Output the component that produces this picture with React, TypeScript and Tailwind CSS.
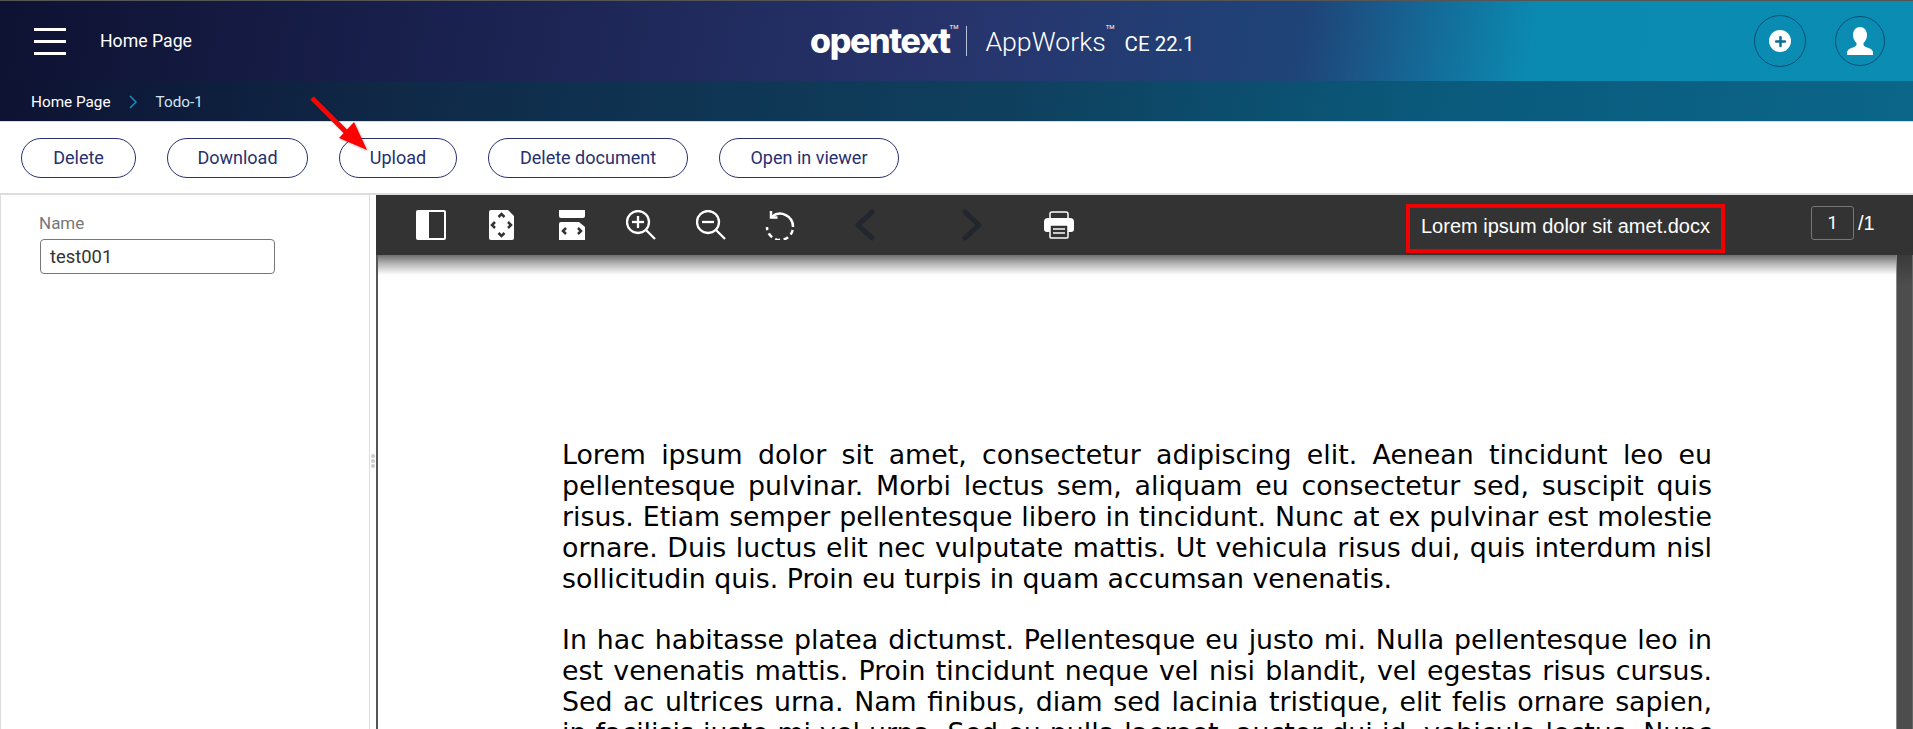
import { Plus } from "lucide-react";

const BUTTONS = [
	{ label: "Delete", width: "w-[115px]" },
	{ label: "Download", width: "w-[141px]" },
	{ label: "Upload", width: "w-[118px]" },
	{ label: "Delete document", width: "w-[200px]" },
	{ label: "Open in viewer", width: "w-[180px]" }
];

function Pill({ label, width }: { label: string; width: string }) {
	return (
		<button className={`${width} h-10 rounded-[20px] border border-[#27306f] bg-white text-[#27306f] text-[18px] font-['Roboto',sans-serif]`}>
			{label}
		</button>
	);
}

function SidebarIcon() {
	return (
		<svg width="30" height="30" viewBox="0 0 30 30">
			<rect width="30" height="30" rx="2" fill="#fff" />
			<rect x="13" y="2" width="15" height="26" fill="#333" />
		</svg>
	);
}

function FitPageIcon() {
	return (
		<svg width="25" height="30" viewBox="0 0 25 30" fill="none">
			<path d="M2 0h17l6 6v22a2 2 0 0 1-2 2H2a2 2 0 0 1-2-2V2a2 2 0 0 1 2-2z" fill="#fff" />
			<path d="M9.5 7l3-3 3 3M9.5 23l3 3 3-3M6 12l-3 3 3 3M19 12l3 3-3 3" stroke="#333" strokeWidth="2.5" />
		</svg>
	);
}

function FitWidthIcon() {
	return (
		<svg width="26" height="30" viewBox="0 0 26 30" fill="none">
			<path d="M0 0h26v6a2 2 0 0 1-2 2H2a2 2 0 0 1-2-2z" fill="#fff" />
			<path d="M2 12h18l6 5v13H0V14a2 2 0 0 1 2-2z" fill="#fff" />
			<path d="M7 18l-3 3 3 3M19 18l3 3-3 3" stroke="#333" strokeWidth="2.5" />
		</svg>
	);
}

function ZoomIcon({ plus }: { plus?: boolean }) {
	return (
		<svg width="30" height="30" viewBox="0 0 30 30" fill="none" stroke="#fff" strokeWidth="2.3">
			<circle cx="12" cy="12" r="11" />
			<path d="M20 20l9 9" />
			<path d="M6 12h12" />
			{plus && <path d="M12 6v12" />}
		</svg>
	);
}

function RotateIcon() {
	return (
		<svg width="30" height="30" viewBox="0 0 30 30" fill="none" stroke="#fff" strokeWidth="2.5">
			<path d="M7 6.500A13 13 0 0 1 28 17" />
			<path d="M28 17A13 13 0 0 1 2 17" strokeDasharray="5 3.600" strokeDashoffset="-3" />
			<path d="M6 1v6.500h6.500" />
		</svg>
	);
}

function Chevron({ right }: { right?: boolean }) {
	return (
		<svg width="20" height="32" viewBox="0 0 20 32" fill="none" stroke="#22262e" strokeWidth="5" strokeLinecap="round" strokeLinejoin="round">
			<path d={right ? "M3 3l14 13L3 29" : "M17 3L3 16l14 13"} />
		</svg>
	);
}

function PrintIcon() {
	return (
		<svg width="30" height="28" viewBox="0 0 30 28" fill="none">
			<path d="M6 8V3a2 2 0 0 1 2-2h14a2 2 0 0 1 2 2v5" stroke="#fff" strokeWidth="1.5" />
			<path d="M4 7h22a4 4 0 0 1 4 4v7a3 3 0 0 1-3 3H3a3 3 0 0 1-3-3v-7a4 4 0 0 1 4-4z" fill="#fff" />
			<rect x="6" y="14" width="18" height="13" rx="1" fill="#333" stroke="#fff" strokeWidth="1.5" />
			<path d="M9 18h12M9 22h12" stroke="#fff" strokeWidth="1.5" />
		</svg>
	);
}

function UserBust() {
	return (
		<svg width="26" height="28" viewBox="0 0 26 28" fill="#fff">
			<path d="M13 0c4 0 7 3.500 7 8 0 3.500-1.500 6-3.500 8v1.500c0 1.500 2 2.500 5 3.500 3 1 4.500 2.500 4.500 5v2H0v-2c0-2.500 1.500-4 4.500-5 3-1 5-2 5-3.500V16C7.500 14 6 11.500 6 8c0-4.500 3-8 7-8z" />
		</svg>
	);
}

function RedArrow() {
	return (
		<svg className="absolute left-[306px] top-[92px] pointer-events-none drop-shadow-[1px_1px_1px_rgba(0,0,0,0.3)]" width="70" height="66" viewBox="0 0 70 66">
			<path d="M6 6l42 42" stroke="#ff0000" strokeWidth="5" />
			<path d="M61 58L33 46l15-16z" fill="#ff0000" />
		</svg>
	);
}

export default function App() {
	return (
		<div className="relative h-[729px] w-[1913px] overflow-hidden bg-white font-['Roboto',sans-serif]">
			<div className="h-px bg-[#555]" />
			<header className="h-[80px] flex items-center bg-[linear-gradient(100deg,#0e1232_0%,#1a2250_25%,#27346c_50%,#1f4478_68%,#0b8ab1_80%,#0a8cb3_100%)] text-white">
				<div className="ml-[34px] w-[32px] flex flex-col gap-[9px]">
					<span className="h-[3px] bg-white" />
					<span className="h-[3px] bg-white" />
					<span className="h-[3px] bg-white" />
				</div>
				<span className="ml-[34px] text-[17.7px]">Home Page</span>
				<div className="ml-[618px] flex items-center">
					<span className="font-['Inter',sans-serif] font-extrabold text-[34px] tracking-[-1.4px] leading-none">opentext</span>
					<span className="self-start mt-[-2px] text-[6px]">TM</span>
					<span className="ml-[8px] w-px h-[30px] bg-[#b8c0d8]" />
					<span className="ml-[18px] mt-[2px] text-[26.7px] font-light leading-none">AppWorks</span>
					<span className="self-start mt-[-2px] text-[6px]">TM</span>
					<span className="ml-[10px] mt-[6px] text-[20.5px] leading-none">CE 22.1</span>
				</div>
				<div className="ml-auto mr-[28px] flex items-center gap-[29px]">
					<div className="w-[52px] h-[52px] rounded-full border border-[#074f75] flex items-center justify-center">
						<span className="w-[22px] h-[22px] rounded-full bg-white flex items-center justify-center">
							<Plus size={15} strokeWidth={4} color="#0a6f95" />
						</span>
					</div>
					<div className="w-[50px] h-[50px] rounded-full border border-[#074f75] flex items-center justify-center">
						<UserBust />
					</div>
				</div>
			</header>
			<nav className="h-[40px] flex items-center pl-[31px] pt-[2px] text-[15.3px] text-white bg-[linear-gradient(100deg,#0e1232_0%,#0f2a48_22%,#0e4260_55%,#0a5a7c_75%,#0b6689_100%)]">
				<span>Home Page</span>
				<svg className="ml-[18px]" width="8" height="14" viewBox="0 0 8 14" fill="none" stroke="#1a8fc0" strokeWidth="1.5">
					<path d="M1 1l6 6-6 6" />
				</svg>
				<span className="ml-[19px] text-[#cfe6f2]">Todo-1</span>
			</nav>
			<div className="h-[72px] flex items-center gap-[31px] pl-[21px] border-t border-[#d5dde4]">
				{BUTTONS.map(b => (
					<Pill key={b.label} label={b.label} width={b.width} />
				))}
			</div>
			<div className="h-[2px] bg-[#ddd]" />
			<div className="flex h-[534px]">
				<aside className="w-[370px] border-l border-r border-[#ddd] pl-[39px] pt-[18px] shrink-0">
					<label className="block -ml-px text-[#777] text-[17px] leading-[20px]">Name</label>
					<div className="mt-[6px] w-[235px] h-[35px] border border-[#777] rounded-[4px] flex items-center pl-[9px] text-[18.4px] text-[#333]">
						test001
					</div>
				</aside>
				<div className="w-[6px] shrink-0 flex flex-col items-center justify-center gap-[1px] pb-[2px]">
					<span className="w-[4px] h-[4px] rounded-full bg-[#ccc]" />
					<span className="w-[4px] h-[4px] rounded-full bg-[#ccc]" />
					<span className="w-[4px] h-[4px] rounded-full bg-[#ccc]" />
				</div>
				<main className="relative flex-1 min-w-0 flex flex-col">
					<div className="h-[60px] shrink-0 bg-[#333] flex items-center text-white relative z-10">
						<div className="ml-[40px] flex items-center">
							<SidebarIcon />
							<span className="ml-[43px]"><FitPageIcon /></span>
							<span className="ml-[45px]"><FitWidthIcon /></span>
							<span className="ml-[41px]"><ZoomIcon plus /></span>
							<span className="ml-[40px]"><ZoomIcon /></span>
							<span className="ml-[39px]"><RotateIcon /></span>
							<span className="ml-[60px]"><Chevron /></span>
							<span className="ml-[87px]"><Chevron right /></span>
							<span className="ml-[62px]"><PrintIcon /></span>
						</div>
						<div className="ml-[332px] w-[319px] h-[49px] translate-y-[3px] pb-[5px] border-[4px] border-[#f00000] flex items-center justify-center text-[20px] font-['Liberation_Sans',sans-serif]">
							Lorem ipsum dolor sit amet.docx
						</div>
						<div className="ml-[86px] w-[43px] h-[34px] mt-[-5px] border border-[#777] rounded-[3px] flex items-center justify-center text-[18px]">
							1
						</div>
						<span className="ml-[4px] mt-[-5px] text-[20px] font-['Liberation_Sans',sans-serif]">/1</span>
					</div>
					<div className="relative flex-1 border-l-2 border-[#555] pl-[184px] pt-[184px] pr-[201px]">
						<div className="absolute left-0 right-0 top-0 h-[20px] bg-[linear-gradient(to_bottom,#6e6e6e,#b0b0b0_40%,#fff)]" />
						<div className="font-['DejaVu_Sans',sans-serif] text-[26.8px] leading-[31px] text-black text-justify">
							<p>
								Lorem ipsum dolor sit amet, consectetur adipiscing elit. Aenean tincidunt leo eu pellentesque pulvinar. Morbi lectus sem, aliquam eu consectetur sed, suscipit quis risus. Etiam semper pellentesque libero in tincidunt. Nunc at ex pulvinar est molestie ornare. Duis luctus elit nec vulputate mattis. Ut vehicula risus dui, quis interdum nisl sollicitudin quis. Proin eu turpis in quam accumsan venenatis.
							</p>
							<p className="mt-[30px]">
								In hac habitasse platea dictumst. Pellentesque eu justo mi. Nulla pellentesque leo in est venenatis mattis. Proin tincidunt neque vel nisi blandit, vel egestas risus cursus. Sed ac ultrices urna. Nam finibus, diam sed lacinia tristique, elit felis ornare sapien, in facilisis justo mi vel urna. Sed eu nulla laoreet, auctor dui id, vehicula lectus. Nunc ac lorem sit amet nulla tempus.
							</p>
						</div>
						<div className="absolute right-0 top-0 bottom-0 w-[17px] bg-[linear-gradient(to_bottom,#3a3a3a,#4d4d4d_30px)] border-l border-[#888] border-r border-r-[#666]" />
					</div>
				</main>
			</div>
			<RedArrow />
		</div>
	);
}
